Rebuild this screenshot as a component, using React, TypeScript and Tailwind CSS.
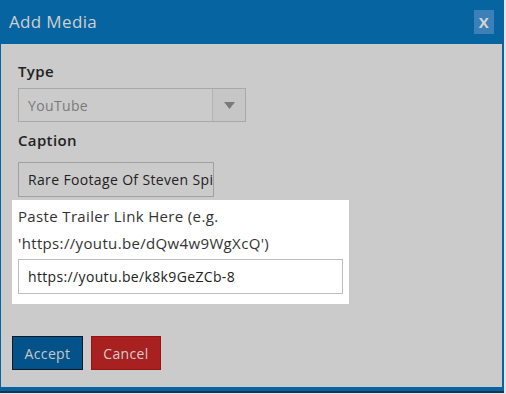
import React from "react";

export default function App() {
  const font = { fontFamily: '"Open Sans", "Liberation Sans", sans-serif' };

  return (
    <div className="w-[506px] h-[394px] bg-[#e4e4e4] overflow-hidden tracking-[0.35px]" style={font}>
      <div className="w-[504px] h-[393px] flex flex-col">
        {/* header */}
        <div className="h-[44px] bg-[#0664a0] flex items-center justify-between pl-[9px] pr-[10px] shrink-0">
          <h1 className="text-[17px] text-[#d0d0d0]">Add Media</h1>
          <button className="w-[20px] h-[24px] bg-[#3b80b6] text-[#d4d4d4] text-[15px] font-bold flex items-center justify-center">
            X
          </button>
        </div>

        {/* body */}
        <div className="flex-1 bg-[#cbcbcb] border-l border-r-2 border-[#0664a0] pl-[11px] pt-[15px]">
          <div className="px-[6px]">
            <label className="block text-[15px] font-semibold text-[#222] leading-[24px]">Type</label>
            <div className="mt-[5px] w-[228px] h-[34px] border border-[#a9a9a9] flex">
              <div className="flex-1 flex items-center pl-[9px] text-[14px] text-[#7a7a7a]">YouTube</div>
              <div className="w-[33px] border-l border-[#b3b3b3] bg-[#c6c6c6] flex items-center justify-center">
                <svg width="11" height="7" viewBox="0 0 11 7">
                  <path d="M0 0 L11 0 L5.5 7 Z" fill="#7a7a7a" />
                </svg>
              </div>
            </div>

            <label className="block mt-[6px] text-[15px] font-semibold text-[#222] leading-[24px]">Caption</label>
            <input
              readOnly
              value="Rare Footage Of Steven Spielberg"
              className="block mt-[10px] w-[196px] h-[35px] border border-[#a0a0a0] bg-transparent pl-[9px] text-[14px] text-[#222] outline-none"
            />
          </div>

          <div className="mt-[3px] w-[337px] bg-white px-[6px] pt-[3px] pb-[10px]">
            <label className="block text-[15px] text-[#333] leading-[27px]">
              Paste Trailer Link Here (e.g.
              <br />
              'https://youtu.be/dQw4w9WgXcQ')
            </label>
            <div className="mt-[2px] w-[325px] h-[35px] border border-[#bdbdbd] flex items-center pl-[9px] text-[14px] text-[#222]">
              https://youtu.be/k8k9GeZCb-8
            </div>
          </div>

          <div className="mt-[32px] flex gap-[8px]">
            <button className="w-[71px] h-[34px] bg-[#04528a] border border-[#0a1a2a] text-[14px] text-[#c8c8c8]">
              Accept
            </button>
            <button className="w-[70px] h-[34px] bg-[#a82020] border border-[#971212] text-[14px] text-[#cfcfcf]">
              Cancel
            </button>
          </div>
        </div>

        <div className="h-[4px] bg-[#0664a0] shrink-0" />
        <div className="h-[2px] bg-[#173452] shrink-0" />
      </div>
    </div>
  );
}
